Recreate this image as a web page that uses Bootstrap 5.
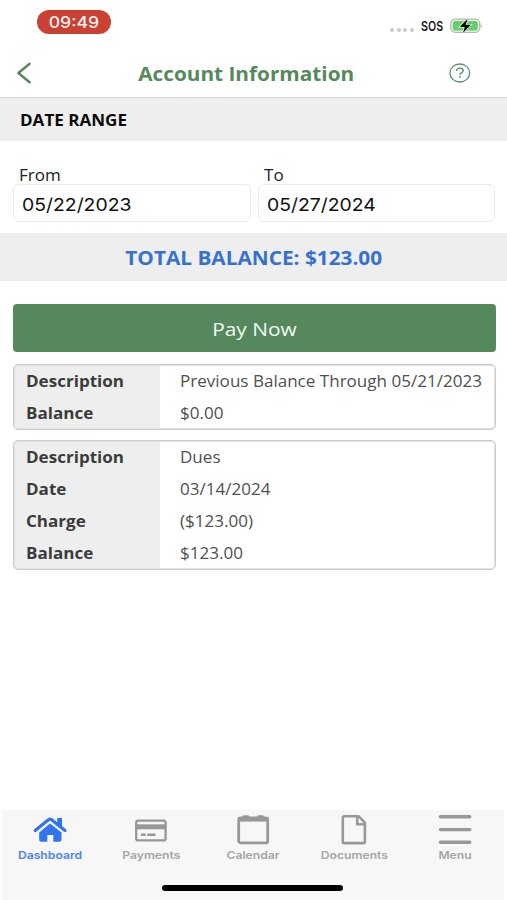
<!DOCTYPE html>
<html lang="en">
<head>
<meta charset="utf-8">
<meta name="viewport" content="width=device-width, initial-scale=1">
<title>Account Information</title>
<link href="https://cdn.jsdelivr.net/npm/bootstrap@5.3.0/dist/css/bootstrap.min.css" rel="stylesheet">
<style>
:root{--green:#55895d;--band:#eee;--wide:1.1;--drop:1px}
body{font-family:"Open Sans",sans-serif;font-size:15.5px;color:#111;background:#fff}
.screen{height:900px;overflow:hidden}
.wide{display:inline-block;white-space:nowrap;transform:translateY(var(--drop)) scaleX(var(--wide));transform-origin:left center}
.wide-mid{transform-origin:center}
.ui-font{font-family:Inter,"Liberation Sans",sans-serif}
.status-bar{--drop:0px;height:49px;padding:10px 24.5px 0 37px}
.clock{width:74px;height:24px;background:#ca4033;color:#fff3f0;font-size:16px;font-weight:500}
.clock .wide{--drop:-.5px}
.signal{gap:2.6px;margin-top:8px;margin-right:6.5px}
.signal i{width:4px;height:4px;border-radius:50%;background:#c9c9c9}
.sos{font-size:13.5px;font-weight:600;--wide:.79;width:22px;color:#1a1a1a;margin-right:7px}
.title-bar{height:49px;padding:0 35.5px 0 16px;border-bottom:1px solid #d6d6d6}
.title-text{font-size:18.9px;line-height:48px;color:var(--green)}
.band-date{height:43px;padding-left:19.5px;background:var(--band);color:#0b0b0b}
.dates{padding:23px 12px 11px 13px;gap:7px}
.dates label{line-height:20px;height:20px;padding-left:6px;color:#222;display:block}
.date-box{--wide:1.09;--drop:1.5px;height:38px;padding:0 0 0 8px;border:1px solid #ebebeb;border-radius:6px;font-size:17.8px;color:#111}
.band-total{height:48px;background:var(--band);color:#3672cd;font-size:18.9px}
.main-area{padding:23px 11.5px 0 13px}
.pay-btn{height:48px;background:var(--green);color:#f2f8f1;border:0;border-radius:4px;font-size:19px;padding:0}
.pay-btn:hover{background:#4b7b53;color:#fff}
.entry{border:1px solid #cdcdcd;border-radius:5px;box-shadow:inset 0 0 0 1px #e2e2e2;overflow:hidden;background:linear-gradient(90deg,var(--band) 146.5px,#fff 146.5px)}
.entry-line{height:32px}
.entry-key{width:146.5px;padding-left:11.5px;color:#3b3b3b;font-weight:700}
.entry-val{padding-left:19.5px;color:#505050}
.tab-bar{--wide:1.107;--drop:.5px;height:90px;margin:0 3px 0 2px;background:#f7f7f7;padding-top:2px}
.tab-bar a{width:101.3px;color:#a6a6a6;text-decoration:none;font-size:11px;font-weight:600;line-height:14px}
.tab-bar a.active{color:#4c84f2}
.tab-bar svg{height:35px;width:40px;display:block;color:#989898}
.tab-bar a.active svg{color:#3074f0}
.home-line{width:181px;height:5.5px;background:#000;margin-left:160px;margin-top:24px}
</style>
</head>
<body>
<div class="screen d-flex flex-column">
  <div class="status-bar d-flex justify-content-between align-items-start ui-font">
    <div class="clock rounded-pill d-flex align-items-center justify-content-center"><span class="wide wide-mid">09:49</span></div>
    <div class="d-flex align-items-center" style="height:32px">
      <div class="signal d-flex"><i></i><i></i><i></i><i></i></div>
      <span class="wide sos">SOS</span>
      <svg width="33" height="16" viewBox="0 0 33 16"><rect x=".8" y="1.2" width="29" height="13.2" rx="4.4" fill="#e9f3e7" stroke="#b3b8b1" stroke-width="1.3"/><rect x="2.8" y="3" width="25" height="9.6" rx="2.6" fill="#65cf6b"/><path d="M31.2 5.8q1.5 2 0 4z" fill="#999"/><path d="M17.6.8 9.7 9h5.1l-1.9 6L20.8 6.8h-5.1z" fill="#050505" stroke="#e6f5e4" stroke-width="1.6" paint-order="stroke"/></svg>
    </div>
  </div>
  <header class="title-bar d-flex align-items-center justify-content-between">
    <svg width="16" height="22" viewBox="0 0 16 22" fill="none" stroke="#55895d" stroke-width="2.4" stroke-linecap="round" stroke-linejoin="round"><path d="M13.6 1.8 2.4 11l11.2 9.2"/></svg>
    <h1 class="title-text fw-bold m-0"><span class="wide wide-mid" style="margin-left:10px">Account Information</span></h1>
    <svg width="22" height="20" viewBox="0 0 22 20" fill="none" stroke="#5c8f6c" stroke-width="1.3"><ellipse cx="10.8" cy="10" rx="9.9" ry="9"/><path d="M7.6 8c0-4 6.6-3.6 6.6-.3 0 2.3-3.3 2.2-3.3 4.3" stroke-width="1.4"/><path d="M10.9 13.1v1.7" stroke-width="1.6"/></svg>
  </header>
  <div class="band-date d-flex align-items-center fw-bold"><span class="wide">DATE RANGE</span></div>
  <div class="dates d-flex">
    <div class="flex-fill"><label><span class="wide">From</span></label><div class="date-box d-flex align-items-center ui-font"><span class="wide">05/22/2023</span></div></div>
    <div class="flex-fill"><label><span class="wide">To</span></label><div class="date-box d-flex align-items-center ui-font"><span class="wide">05/27/2024</span></div></div>
  </div>
  <div class="band-total d-flex align-items-center justify-content-center fw-bold"><span class="wide wide-mid">TOTAL BALANCE: $123.00</span></div>
  <main class="main-area flex-grow-1">
    <button class="btn pay-btn w-100 d-flex align-items-center justify-content-center"><span class="wide wide-mid">Pay Now</span></button>
    <div class="entry" style="margin-top:12px">
      <div class="entry-line d-flex align-items-center"><div class="entry-key"><span class="wide">Description</span></div><div class="entry-val"><span class="wide">Previous Balance Through 05/21/2023</span></div></div>
      <div class="entry-line d-flex align-items-center"><div class="entry-key"><span class="wide">Balance</span></div><div class="entry-val"><span class="wide">$0.00</span></div></div>
    </div>
    <div class="entry" style="margin-top:10px">
      <div class="entry-line d-flex align-items-center"><div class="entry-key"><span class="wide">Description</span></div><div class="entry-val"><span class="wide">Dues</span></div></div>
      <div class="entry-line d-flex align-items-center"><div class="entry-key"><span class="wide">Date</span></div><div class="entry-val"><span class="wide">03/14/2024</span></div></div>
      <div class="entry-line d-flex align-items-center"><div class="entry-key"><span class="wide">Charge</span></div><div class="entry-val"><span class="wide">($123.00)</span></div></div>
      <div class="entry-line d-flex align-items-center"><div class="entry-key"><span class="wide">Balance</span></div><div class="entry-val"><span class="wide">$123.00</span></div></div>
    </div>
  </main>
  <nav class="tab-bar ui-font">
    <div class="d-flex" style="margin-left:-2.5px;margin-right:-3px">
      <a href="#" class="active d-flex flex-column align-items-center"><svg viewBox="0 0 40 35" fill="currentColor"><path d="M20 11.6 31.5 20.6v7.1q0 2-2 2h-6.2v-6.8h-6v6.8h-6.1q-2 0-2-2v-7.1z"/><path d="M5.2 18.6 18.4 7.7q1.6-1.2 3.2 0L35 18.6" fill="none" stroke="currentColor" stroke-width="3.2" stroke-linecap="round"/><path d="M27.2 6h4.8v10l-4.8-3.8z"/></svg><span class="wide wide-mid">Dashboard</span></a>
      <a href="#" class="d-flex flex-column align-items-center"><svg viewBox="0 0 40 35" fill="none" stroke="currentColor"><rect x="5.2" y="8.6" width="29.4" height="19.8" rx="2" stroke-width="2.3"/><path d="M5 14.8h29.8" stroke-width="5"/><path d="M10 22.8h4.8M16.3 22.8h8.2" stroke-width="2.6"/></svg><span class="wide wide-mid">Payments</span></a>
      <a href="#" class="d-flex flex-column align-items-center"><svg viewBox="0 0 40 35" fill="none" stroke="currentColor"><rect x="5.7" y="5.9" width="29" height="25" rx="2" stroke-width="2.8"/><path d="M5 7.4h30.4" stroke-width="4.4"/><path d="M10.8 4.5h4M25.6 4.5h4" stroke-width="2.6" stroke-linecap="round"/></svg><span class="wide wide-mid">Calendar</span></a>
      <a href="#" class="d-flex flex-column align-items-center"><svg viewBox="0 0 40 35" fill="none" stroke="currentColor" stroke-width="2.6" stroke-linejoin="round"><path d="M24.8 4.3H10.4q-1.6 0-1.6 1.6v23.6q0 1.6 1.6 1.6h18.9q1.6 0 1.6-1.6V10.6zM23.2 4.3v7.9h7.6"/></svg><span class="wide wide-mid">Documents</span></a>
      <a href="#" class="d-flex flex-column align-items-center"><svg viewBox="0 0 40 35" fill="none" stroke="currentColor" stroke-width="3.4" stroke-linecap="round"><path d="M5.4 4.8h29.4M5.4 17.6h29.4M5.4 30.2h29.4"/></svg><span class="wide wide-mid">Menu</span></a>
    </div>
    <div class="home-line rounded-pill"></div>
  </nav>
</div>
</body>
</html>
